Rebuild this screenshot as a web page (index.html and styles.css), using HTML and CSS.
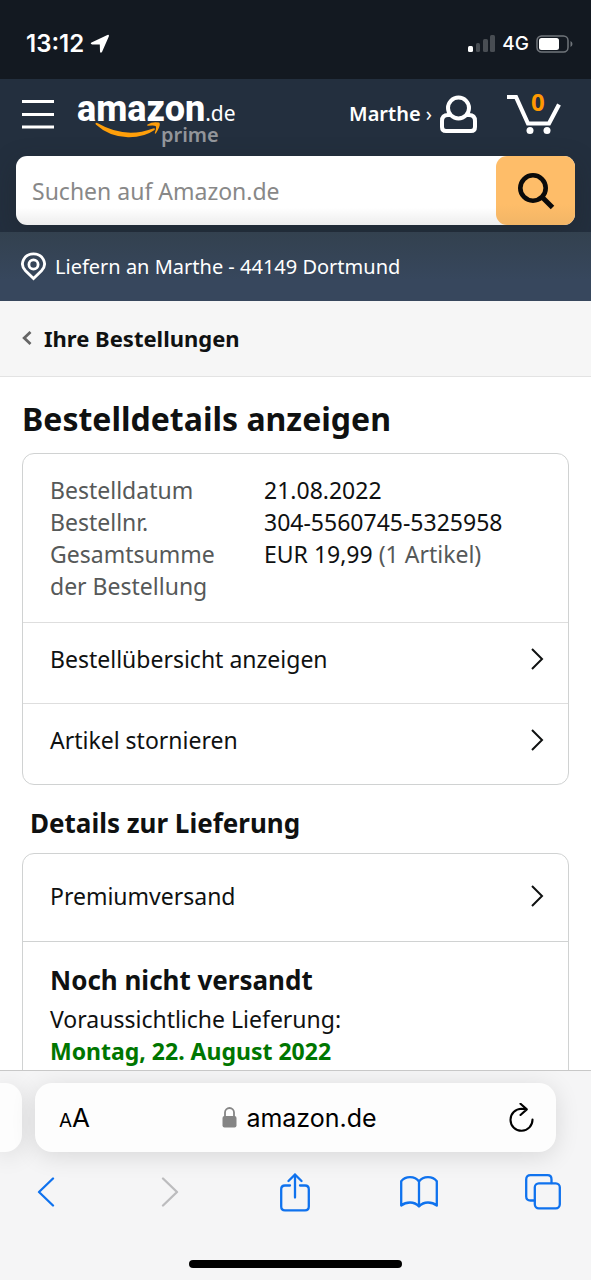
FILE: index.html
```html
<!DOCTYPE html>
<html lang="de">
<head>
<meta charset="utf-8">
<meta name="viewport" content="width=device-width, initial-scale=1">
<title>Bestelldetails anzeigen</title>
<link rel="stylesheet" href="styles.css">
</head>
<body>
<div class="status">
  <div class="status-group">
    <span class="clock">13:12</span>
    <svg width="20" height="20" viewBox="0 0 20 20" fill="#fff"><path d="M1.500 8.400 17.400 1Q19.400.4 18.800 2.400L12 18Q10.500 19.600 10 17.500L9.800 10.600 2.200 10.600Q-.3 9.600 1.500 8.400Z"/></svg>
  </div>
  <div class="status-group status-right">
    <svg width="27" height="18" viewBox="0 0 27 18"><rect x="0" y="11" width="5" height="6" rx="1.500" fill="#fff"/><g fill="#484d53"><rect x="8" y="8" width="4" height="9" rx="1.500"/><rect x="15" y="4" width="5" height="13" rx="1.500"/><rect x="22" y="0" width="5" height="17" rx="1.500"/></g></svg>
    <span class="network">4G</span>
    <svg width="37" height="18" viewBox="0 0 37 18"><rect x="1" y="1" width="31" height="16" rx="4.500" fill="none" stroke="#70757b" stroke-width="1.500"/><rect x="3" y="3" width="20" height="12" rx="2.500" fill="#fff"/><path d="M34.500 6Q36.500 7 36.500 9T34.500 12Z" fill="#70757b"/></svg>
  </div>
</div>

<header class="nav">
  <div class="nav-row">
    <button class="icon-button" aria-label="Menü"><svg width="32" height="30" viewBox="0 0 32 30" stroke="#fff" stroke-width="3"><path d="M0 2.500H32M0 15.500H32M0 28H32"/></svg></button>
    <a class="logo" href="#">
      <span class="logo-top"><span class="logo-name">amazon</span><span class="logo-tld">.de</span></span>
      <span class="logo-bottom">
        <svg width="66" height="17" viewBox="0 0 66 17" fill="#ff9f0a"><path d="M.5 1.200Q1.200.2 2.800 1.300 30 17 58 6.500 60.800 5.800 59.600 8 49 15.500 33 15.200 14 14.500.8 2.400Z"/><path d="M52.500 2.500Q58 -.8 64 .6 66.500 1.800 61.300 10.800 59.900 12.500 59.800 11 61.700 5.800 60.800 4.200 59.200 2.800 53 3.800 51.500 3.600 52.500 2.500Z"/></svg>
        <span class="logo-prime">prime</span>
      </span>
    </a>
    <a class="account" href="#"><span>Marthe <span class="account-arrow">›</span></span>
      <svg width="38" height="39" viewBox="0 0 38 39" fill="none" stroke="#fff" stroke-width="4"><circle cx="18.500" cy="13" r="10.500"/><path d="M10 20H8Q2 20 2 26V32Q2 36 6 36H31Q35 36 35 32V26Q35 20 29 20H27"/></svg>
    </a>
    <a class="cart" href="#" aria-label="Einkaufswagen">
      <svg width="54" height="41" viewBox="0 0 54 41"><path d="M0 3H9L21 29.500H42L52 10.500" fill="none" stroke="#fff" stroke-width="4.200"/><g fill="#fff"><circle cx="23" cy="36.500" r="3.500"/><circle cx="40" cy="36.500" r="3.500"/></g></svg>
      <span class="cart-count">0</span>
    </a>
  </div>
  <form class="search">
    <input class="search-input" type="text" placeholder="Suchen auf Amazon.de" aria-label="Suchen auf Amazon.de">
    <button class="search-button" type="button" aria-label="Suchen"><svg width="38" height="38" viewBox="0 0 38 38" fill="none" stroke="#0a0a0a"><circle cx="16" cy="16" r="12.700" stroke-width="4.600"/><path d="M25 25 35.500 35.500" stroke-width="5"/></svg></button>
  </form>
</header>

<a class="location" href="#">
  <svg width="25" height="29" viewBox="0 0 25 29" fill="none" stroke="#fff" stroke-width="2.800"><path d="M12.500 26.500 4.500 18.800C-2.300 11.500 3.500 1.800 12.500 1.800S27.300 11.500 20.500 18.800Z"/><circle cx="12.500" cy="12.500" r="4.600"/></svg>
  <span>Liefern an Marthe - 44149 Dortmund</span>
</a>

<nav class="crumb"><a class="crumb-link" href="#">
  <svg width="10" height="14" viewBox="0 0 10 14" fill="none" stroke="#666" stroke-width="2.800"><path d="M8.500 1 2.200 7 8.500 13"/></svg>
  <span>Ihre Bestellungen</span></a>
</nav>

<main class="page">
  <h1 class="title">Bestelldetails anzeigen</h1>
  <section class="card">
    <dl class="facts">
      <dt>Bestelldatum</dt><dd>21.08.2022</dd>
      <dt>Bestellnr.</dt><dd>304-5560745-5325958</dd>
      <dt>Gesamtsumme der Bestellung</dt><dd>EUR 19,99 <span class="muted">(1 Artikel)</span></dd>
    </dl>
    <a class="row" href="#"><span>Bestellübersicht anzeigen</span><svg class="chevron" width="14" height="24" viewBox="0 0 14 24"><path d="M2 2 12 12 2 22"/></svg></a>
    <a class="row" href="#"><span>Artikel stornieren</span><svg class="chevron" width="14" height="24" viewBox="0 0 14 24"><path d="M2 2 12 12 2 22"/></svg></a>
  </section>
  <h2 class="subtitle">Details zur Lieferung</h2>
  <section class="card">
    <a class="row row-tall" href="#"><span>Premiumversand</span><svg class="chevron" width="14" height="24" viewBox="0 0 14 24"><path d="M2 2 12 12 2 22"/></svg></a>
    <div class="shipment">
      <h3 class="shipment-title">Noch nicht versandt</h3>
      <p class="line">Voraussichtliche Lieferung:</p>
      <p class="line eta">Montag, 22. August 2022</p>
    </div>
  </section>
</main>

<footer class="browser">
  <div class="tabs">
    <div class="tab-peek"></div>
    <div class="address">
      <button class="text-size" aria-label="Textgröße"><span class="small-a">A</span>A</button>
      <span class="domain"><svg width="15" height="21" viewBox="0 0 15 21"><path d="M3 10V5.500a4.500 4.500 0 0 1 9 0V10" fill="none" stroke="#858585" stroke-width="1.800"/><rect x=".5" y="9" width="14" height="11.500" rx="2" fill="#858585"/></svg>amazon.de</span>
      <button class="icon-button" aria-label="Neu laden"><svg width="25" height="30" viewBox="0 0 25 30" fill="none" stroke="#000" stroke-width="2.100" stroke-linecap="round" stroke-linejoin="round"><path d="M23.500 16.500A11 11 0 1 1 12.500 5.800L17.500 6.200M11.500 .8 17.800 6.400 11.500 12"/></svg></button>
    </div>
  </div>
  <div class="tools">
    <button class="icon-button" aria-label="Zurück"><svg width="18" height="30" viewBox="0 0 18 30"><path d="M16 1.500 2 15 16 28.500"/></svg></button>
    <button class="icon-button disabled" aria-label="Vorwärts"><svg width="18" height="30" viewBox="0 0 18 30"><path d="M2 1.500 16 15 2 28.500"/></svg></button>
    <button class="icon-button" aria-label="Teilen"><svg width="30" height="39" viewBox="0 0 30 39"><path d="M10 12.500H5Q1.200 12.500 1.200 16.300V33.500Q1.200 37.300 5 37.300H25Q28.800 37.300 28.800 33.500V16.300Q28.800 12.500 25 12.500H20M15 24.500V1.500M8.500 8 15 1.500 21.500 8"/></svg></button>
    <button class="icon-button" aria-label="Lesezeichen"><svg width="38" height="32" viewBox="0 0 38 32"><path d="M19 30.500V5.500Q16 1.200 10 1.200 4.500 1.200 1.200 5.200V29.500Q5 26.500 10 26.500 15.500 26.500 19 30.500 22.500 26.500 28 26.500 33 26.500 36.800 29.500V5.200Q33.500 1.200 28 1.200 22 1.200 19 5.500"/></svg></button>
    <button class="icon-button" aria-label="Tabs"><svg width="36" height="36" viewBox="0 0 36 36"><path d="M9.500 26.500H5.500Q1.200 26.500 1.200 22.500V5.500Q1.200 1.200 5.500 1.200H22.500Q26.500 1.200 26.500 5.500V9"/><rect x="9.800" y="9.300" width="25" height="25" rx="4"/></svg></button>
  </div>
  <div class="home-bar"></div>
</footer>
</body>
</html>
```
FILE: styles.css
```css
* { box-sizing: border-box; }
body {
  margin: 0;
  height: 100vh;
  display: flex;
  flex-direction: column;
  overflow: hidden;
  background: #fff;
  color: #0f1111;
  font-family: "Noto Sans", "Open Sans", sans-serif;
  font-size: 23px;
  line-height: 32px;
}
a { color: inherit; text-decoration: none; }
svg { display: block; flex: none; }
button { font: inherit; color: inherit; border: 0; background: none; padding: 0; }
h1, h2, h3, p, dl, dd { margin: 0; }

.status {
  display: flex;
  flex: none;
  justify-content: space-between;
  align-items: center;
  height: 79px;
  padding: 8px 18px 0 26px;
  background: #131921;
  color: #fff;
  font-family: Inter, sans-serif;
}
.status-group { display: flex; align-items: center; gap: 6px; }
.status-right { gap: 7px; }
.clock { font-size: 24px; font-weight: 600; }
.network { font-size: 19px; font-weight: 500; }

.nav { flex: none; background: #232f3e; color: #fff; padding: 0 16px 7px; }
.nav-row { display: flex; align-items: center; height: 77px; padding: 0 14px 7px 6px; }
.icon-button { display: flex; align-items: center; justify-content: center; }
.logo { display: flex; flex-direction: column; margin-left: 23px; padding-top: 12px; }
.logo-top { display: flex; align-items: baseline; height: 29px; line-height: 32px; }
.logo-name { font-family: Roboto, sans-serif; font-size: 36px; font-weight: 800; }
.logo-tld { font-size: 21px; }
.logo-bottom { display: flex; padding-left: 18px; }
.logo-prime { color: #92959a; font-size: 20px; font-weight: 600; line-height: 26px; }
.account { display: flex; align-items: center; gap: 8px; margin-left: auto; font-size: 20px; font-weight: 600; }
.account-arrow { font-weight: 400; }
.cart { position: relative; margin-left: 29px; }
.cart-count { position: absolute; top: -8px; left: 24px; color: #ff9900; font-size: 24px; font-weight: 700; }

.search {
  display: flex;
  height: 69px;
  border-radius: 11px;
  background: linear-gradient(#fff 75%, #ededed);
  box-shadow: 0 8px 24px rgba(30, 36, 40, .4);
}
.search-input {
  flex: 1;
  min-width: 0;
  padding: 0 16px;
  border: 0;
  outline: 0;
  background: none;
  font: inherit;
}
.search-input::placeholder { color: #888; opacity: 1; }
.search-button {
  display: flex;
  align-items: center;
  justify-content: center;
  width: 79px;
  border-radius: 11px;
  background: linear-gradient(#febd69 70%, #f2b566);
}

.location {
  display: flex;
  flex: none;
  align-items: center;
  gap: 9px;
  height: 69px;
  padding: 0 21px;
  background: linear-gradient(#33414f, #37475d 70%);
  color: #fff;
  font-size: 20px;
}

.crumb { flex: none; padding: 21px 22px 22px; background: #f6f6f6; border-bottom: 1px solid #e3e3e3; }
.crumb-link { display: flex; align-items: center; gap: 12px; font-size: 22px; font-weight: 700; }

.page { flex: 1; min-height: 0; overflow: hidden; padding: 20px 22px 0; }
.title { font-size: 32px; line-height: 44px; font-weight: 700; margin-bottom: 12px; }
.card { border: 1px solid #d0d2d2; border-radius: 12px; }
.facts {
  display: grid;
  grid-template-columns: 190px 1fr;
  column-gap: 24px;
  padding: 20px 27px;
}
.facts dt, .muted { color: #565959; }
.row {
  display: flex;
  align-items: center;
  justify-content: space-between;
  min-height: 81px;
  padding: 0 24px 8px 27px;
  border-top: 1px solid #dedede;
}
.row-tall { min-height: 87px; padding-bottom: 3px; border-top: 0; }
.chevron { fill: none; stroke: #0f1111; stroke-width: 2; }
.subtitle { margin: 20px 8px 12px; font-size: 26px; line-height: 36px; font-weight: 700; }
.shipment { border-top: 1px solid #d0d2d2; padding: 20px 27px; }
.shipment-title { font-size: 26px; line-height: 36px; font-weight: 700; margin-bottom: 5px; }
.eta { color: #007600; font-weight: 700; }

.browser { flex: none; background: #f5f5f6; border-top: 1px solid #c8c8c8; overflow: hidden; }
.tabs { display: flex; gap: 13px; padding: 12px 35px 0 0; }
.tab-peek, .address { height: 69px; background: #fdfdfd; box-shadow: 0 4px 24px rgba(0, 0, 0, .12); }
.tab-peek { width: 22px; border-radius: 0 17px 17px 0; }
.address {
  display: flex;
  flex: 1;
  align-items: center;
  justify-content: space-between;
  padding: 0 22px 0 24px;
  border-radius: 17px;
  color: #000;
  font-family: Inter, sans-serif;
}
.text-size { font-size: 26px; padding-top: 4px; }
.small-a { font-size: 19px; }
.domain { display: flex; align-items: center; gap: 9px; font-size: 25px; }
.tools { display: flex; align-items: center; justify-content: space-between; height: 80px; padding: 0 29px 0 27px; }
.tools .icon-button { width: 38px; }
.tools svg { fill: none; stroke: #0f72ee; stroke-width: 2.3; stroke-linecap: round; stroke-linejoin: round; }
.tools .disabled svg { stroke: #bcbcbe; }
.home-bar { width: 36%; height: 8px; margin: 28px auto 12px; border-radius: 4px; background: #000; }
```
